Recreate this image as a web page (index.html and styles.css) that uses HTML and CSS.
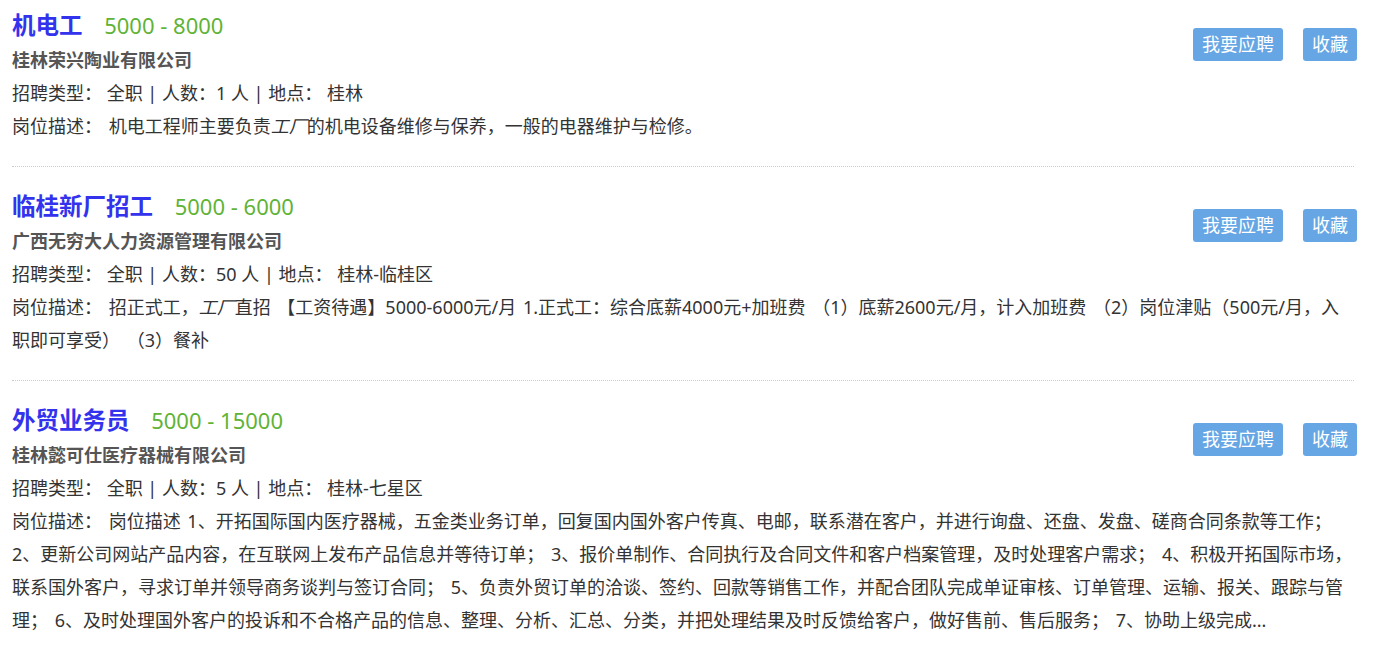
FILE: index.html
```html
<!DOCTYPE html>
<html>
<head>
  <meta charset="UTF-8">
  <title>职位列表</title>
  <link rel="stylesheet" href="styles.css">
</head>
<body>
  <div class="job-list">

    <!-- 职位 1 -->
    <div class="job-item">
      <div class="actions">
        <a class="btn" href="#">我要应聘</a>
        <a class="btn" href="#">收藏</a>
      </div>
      <div class="job-title">
        <a href="#" class="job-name">机电工</a>
        <span class="salary">5000 - 8000</span>
      </div>
      <div class="company">桂林荣兴陶业有限公司</div>
      <div class="meta">招聘类型： 全职 | 人数：1 人 | 地点： 桂林</div>
      <div class="desc">岗位描述： 机电工程师主要负责<em>工厂</em>的机电设备维修与保养，一般的电器维护与检修。</div>
    </div>

    <!-- 职位 2 -->
    <div class="job-item">
      <div class="actions">
        <a class="btn" href="#">我要应聘</a>
        <a class="btn" href="#">收藏</a>
      </div>
      <div class="job-title">
        <a href="#" class="job-name">临桂新厂招工</a>
        <span class="salary">5000 - 6000</span>
      </div>
      <div class="company">广西无穷大人力资源管理有限公司</div>
      <div class="meta">招聘类型： 全职 | 人数：50 人 | 地点： 桂林-临桂区</div>
      <div class="desc">岗位描述： 招正式工，<em>工厂</em>直招 【工资待遇】5000-6000元/月 1.正式工：综合底薪4000元+加班费 （1）底薪2600元/月，计入加班费 （2）岗位津贴（500元/月，入职即可享受） （3）餐补</div>
    </div>

    <!-- 职位 3 -->
    <div class="job-item">
      <div class="actions">
        <a class="btn" href="#">我要应聘</a>
        <a class="btn" href="#">收藏</a>
      </div>
      <div class="job-title">
        <a href="#" class="job-name">外贸业务员</a>
        <span class="salary">5000 - 15000</span>
      </div>
      <div class="company">桂林懿可仕医疗器械有限公司</div>
      <div class="meta">招聘类型： 全职 | 人数：5 人 | 地点： 桂林-七星区</div>
      <div class="desc">岗位描述： 岗位描述 1、开拓国际国内医疗器械，五金类业务订单，回复国内国外客户传真、电邮，联系潜在客户，并进行询盘、还盘、发盘、磋商合同条款等工作； 2、更新公司网站产品内容，在互联网上发布产品信息并等待订单； 3、报价单制作、合同执行及合同文件和客户档案管理，及时处理客户需求； 4、积极开拓国际市场，联系国外客户，寻求订单并领导商务谈判与签订合同； 5、负责外贸订单的洽谈、签约、回款等销售工作，并配合团队完成单证审核、订单管理、运输、报关、跟踪与管理； 6、及时处理国外客户的投诉和不合格产品的信息、整理、分析、汇总、分类，并把处理结果及时反馈给客户，做好售前、售后服务； 7、协助上级完成...</div>
    </div>

  </div>
</body>
</html>
```

FILE: styles.css
```css
/* 职位列表 */
body {
  margin: 0;
  background-color: #fff;
  font-family: "Noto Sans", "Noto Sans CJK SC", "Microsoft YaHei", sans-serif;
  font-size: 18px;
  color: #333;
}
.job-list {
  padding: 0 19px 0 12px;
}
.job-item {
  padding: 21px 0 23px;
  border-bottom: 1px dotted #ccc;
}
.job-item:first-child {
  padding-top: 7px;
}
.actions {
  float: right;
  display: flex;
  gap: 20px;
  margin-top: 21px;
  margin-right: -3px;
}
.btn {
  display: block;
  padding: 0 9px;
  line-height: 33px;
  background-color: #66a6e4;
  color: #fff;
  border-radius: 3px;
  text-decoration: none;
  font-size: 18px;
}
.job-title {
  line-height: 36px;
}
.job-name {
  font-size: 23.5px;
  font-weight: bold;
  color: #3333ee;
  text-decoration: none;
  margin-right: 17px;
}
.salary {
  font-size: 22px;
  color: #5fb336;
}
.company {
  line-height: 31px;
  font-weight: bold;
  color: #555;
}
.meta {
  line-height: 33px;
  padding-top: 1px;
}
.desc {
  line-height: 33px;
  word-spacing: 2px;
}
.desc em {
  font-style: italic;
}
```
